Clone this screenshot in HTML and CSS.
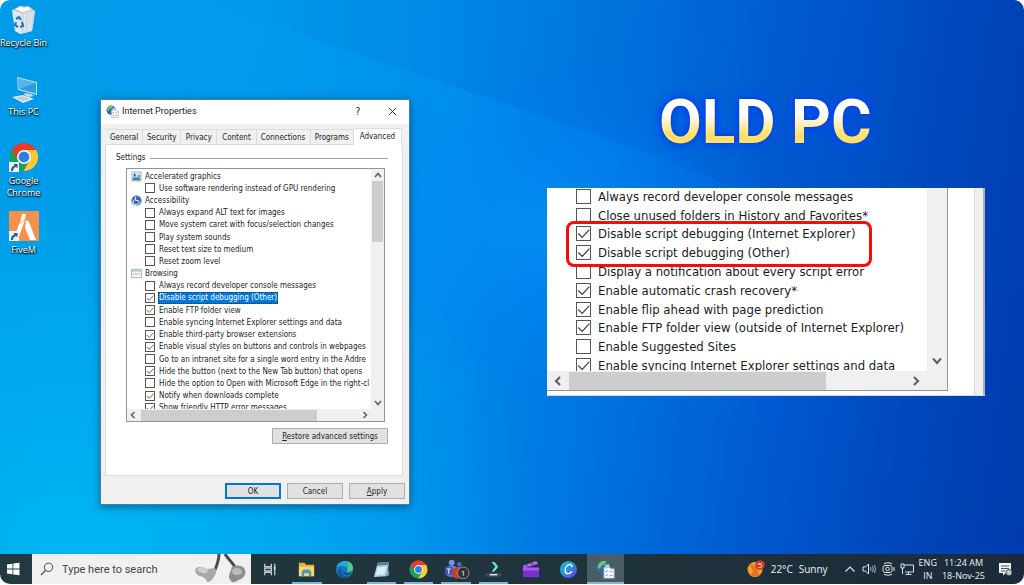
FILE: index.html
```
<!DOCTYPE html>
<html lang="en">
<head>
<meta charset="utf-8">
<title>Desktop</title>
<link rel="stylesheet" href="styles.css">
</head>
<body>
<svg class="defs" aria-hidden="true">
  <defs>
    <symbol id="chrome" viewBox="0 0 32 32">
      <circle cx="16" cy="16" r="15" fill="#1ea052"/>
      <path d="M16 16 3 8.500A15 15 0 0 1 29 8.500L16 9z" fill="#ea3a2c"/>
      <path d="M29 8.500A15 15 0 0 1 16 31l-1-1 7.200-10.500L16 8.500z" fill="#fcc934"/>
      <path d="M3 8.500 9.800 19.500l6-3V8.500z" fill="#ea3a2c"/>
      <path d="M3 8.500A15 15 0 0 0 15.500 31L22 19.500 16 23l-6.200-3.500z" fill="#1ea052"/>
      <circle cx="16" cy="16" r="7.400" fill="#fff"/>
      <circle cx="16" cy="16" r="5.800" fill="#2f7de9"/>
    </symbol>
    <symbol id="shortcut" viewBox="0 0 10 10">
      <path d="M0 0h10v10H0z" fill="#eef4fa"/>
      <path d="M2 9c0-3 1-5 3.500-5.500L4.500 2H8.500v4.200L7 5C5 5.500 4 7 4 9z" fill="#1f5aa8"/>
    </symbol>
    <symbol id="netprops" viewBox="0 0 24 24">
      <circle cx="9.500" cy="9.500" r="8.500" fill="#2c6da6"/>
      <path d="M5 3c3-2 7-2 8-1l-2 4-4 1-2 4-3-1c0-3 1-5 3-7z" fill="#79c267"/>
      <path d="M11 7l5-2 2 5-4 3z" fill="#a9dcf0"/>
      <path d="M10 9h7l2 2h4v12H10z" fill="#f5f7f8" stroke="#9aa7b0"/>
      <path d="M12 14l1 1 2-2M12 19l1 1 2-2" fill="none" stroke="#2f80c0"/>
      <path d="M17 14.500h4M17 19.500h4" stroke="#8a98a2"/>
    </symbol>
    <symbol id="up" viewBox="0 0 12 12"><path d="M3 8l3-3.500L9 8" fill="none" stroke="#606060" stroke-width="1.600"/></symbol>
    <symbol id="down" viewBox="0 0 12 12"><path d="M3 4l3 3.500L9 4" fill="none" stroke="#606060" stroke-width="1.600"/></symbol>
    <symbol id="left" viewBox="0 0 12 12"><path d="M7.500 3 4.500 6l3 3" fill="none" stroke="#606060" stroke-width="1.600"/></symbol>
    <symbol id="right" viewBox="0 0 12 12"><path d="M4.500 3l3 3-3 3" fill="none" stroke="#606060" stroke-width="1.600"/></symbol>
  </defs>
</svg>

<div class="screen">
  <main class="desktop">
    <svg class="wallpaper" viewBox="0 0 1024 554" preserveAspectRatio="none" aria-hidden="true">
      <defs>
        <linearGradient id="beamTop" x1="0" y1="0" x2="1" y2="0">
          <stop offset="0" stop-color="#0058c0" stop-opacity="0"/>
          <stop offset=".35" stop-color="#0050c0" stop-opacity=".16"/>
          <stop offset=".7" stop-color="#0048b8" stop-opacity=".22"/>
          <stop offset="1" stop-color="#0048b8" stop-opacity=".05"/>
        </linearGradient>
        <radialGradient id="glow" cx=".5" cy=".5" r=".5">
          <stop offset="0" stop-color="#0a98ff" stop-opacity=".5"/>
          <stop offset="1" stop-color="#0070ff" stop-opacity="0"/>
        </radialGradient>
        <linearGradient id="beamLow" x1="0" y1="0" x2="1" y2="0">
          <stop offset="0" stop-color="#0058c8" stop-opacity="0"/>
          <stop offset=".5" stop-color="#0058c8" stop-opacity=".1"/>
          <stop offset="1" stop-color="#003ca8" stop-opacity=".04"/>
        </linearGradient>
      </defs>
      <path d="M200 0H1024V300L640 150z" fill="url(#beamTop)"/>
      <ellipse cx="560" cy="230" rx="230" ry="170" fill="url(#glow)"/>
      <path d="M350 420 580 365 1024 520V554H350z" fill="url(#beamLow)"/>
    </svg>

    <nav class="shortcuts" aria-label="Desktop">
      <a class="shortcut" href="#bin">
        <svg class="shortcut-icon" viewBox="0 0 30 30" aria-hidden="true">
          <path d="M3 6l17-3 6 4-3 20-12 3-5-3z" fill="#e6eaee"/>
          <path d="M3 6l9 3 14-2-5-4-8-1z" fill="#bcc6cd"/>
          <path d="M6 5l5-3 4 2 4-2 3 4-9 2z" fill="#f8fafb"/>
          <path d="M12 9l14-2-3 20-11 3z" fill="#d3d9de"/>
          <path d="M16 10l-1 18M20 9l-1 18M23 9l-2 17" stroke="#e9edf0" fill="none"/>
          <path d="M7 15l3-2 2 3M13 18l1 4-3 1M9 23l-3-2 1-3" fill="none" stroke="#1d78d0" stroke-width="2.200"/>
        </svg>
        <span>Recycle Bin</span>
      </a>
      <a class="shortcut" href="#pc">
        <svg class="shortcut-icon" viewBox="0 0 30 30" aria-hidden="true">
          <path d="M8 4l20 5v13L9 17z" fill="#b7dcf4"/>
          <path d="M9 5.500l18 4.500v10.500L10 16z" fill="#2e9be0"/>
          <path d="M9 5.500 27 10 10 16z" fill="#54b4ec"/>
          <path d="M16 20l6 1 3 2-5 1-5-2z" fill="#c9d5dc"/>
          <path d="M3 24l11-2 11 4-11 4z" fill="#dfe7ec"/>
          <path d="M6 24.500l8-1 7 2.500-7 2z" fill="#bccbd4"/>
        </svg>
        <span>This PC</span>
      </a>
      <a class="shortcut" href="#chrome-app">
        <svg class="shortcut-icon" viewBox="0 0 30 30" aria-hidden="true"><use href="#chrome" width="30" height="30"/><use href="#shortcut" y="20" width="10" height="10"/></svg>
        <span>Google<br>Chrome</span>
      </a>
      <a class="shortcut" href="#fivem">
        <svg class="shortcut-icon" viewBox="0 0 30 30" aria-hidden="true">
          <path d="M0 0h30v30H0z" fill="#f98f4c"/>
          <path d="M13 3h4l-1 5-5 4zM10 13l6-4-7 19H5zM17 9l3 2 7 18h-6l-5-12z" fill="#fff"/>
          <use href="#shortcut" y="20" width="10" height="10"/>
        </svg>
        <span>FiveM</span>
      </a>
    </nav>

    <section class="dialog" role="dialog" aria-labelledby="dlg-title">
      <header class="titlebar">
        <svg class="title-icon" aria-hidden="true"><use href="#netprops"/></svg>
        <h2 id="dlg-title">Internet Properties</h2>
        <button class="caption" type="button" aria-label="Help">?</button>
        <button class="caption" type="button" aria-label="Close"><svg viewBox="0 0 10 10" aria-hidden="true"><path d="M1 1l8 8M9 1 1 9" stroke="#222" fill="none"/></svg></button>
      </header>
      <div class="tabs" role="tablist">
        <button type="button" role="tab">General</button>
        <button type="button" role="tab">Security</button>
        <button type="button" role="tab">Privacy</button>
        <button type="button" role="tab">Content</button>
        <button type="button" role="tab">Connections</button>
        <button type="button" role="tab">Programs</button>
        <button type="button" role="tab" class="active" aria-selected="true">Advanced</button>
      </div>
      <div class="panel">
        <h3 class="legend">Settings</h3>
        <div class="listbox">
          <div class="view">
            <div class="rows">
              <div class="group"><svg viewBox="0 0 12 12" aria-hidden="true"><path d="M1 1h10v10H1z" fill="#cfe6f3" stroke="#a8b8c2"/><path d="M2 7h8v3H2z" fill="#3f7fa5"/><path d="M3 3h2v3H3zM7 5h3v1H7z" fill="#2b5f85"/></svg>Accelerated graphics</div>
              <label><input type="checkbox">Use software rendering instead of GPU rendering</label>
              <div class="group"><svg viewBox="0 0 12 12" aria-hidden="true"><circle cx="6" cy="6" r="5.800" fill="#7d9cc4"/><circle cx="6" cy="6" r="4.600" fill="#3567ac"/><path d="M5 2v4h3l1 3M4 5a3 3 0 1 0 4 4" stroke="#fff" fill="none"/></svg>Accessibility</div>
              <label><input type="checkbox">Always expand ALT text for images</label>
              <label><input type="checkbox">Move system caret with focus/selection changes</label>
              <label><input type="checkbox">Play system sounds</label>
              <label><input type="checkbox">Reset text size to medium</label>
              <label><input type="checkbox">Reset zoom level</label>
              <div class="group"><svg viewBox="0 0 12 12" aria-hidden="true"><path d="M.5 1.500h11v9H.5z" fill="#f0f4f6" stroke="#a9a9a9"/><path d="M1 2h10v2H1z" fill="#b5d3e8"/><path d="M2 6.500h8" stroke="#9cc3de"/></svg>Browsing</div>
              <label><input type="checkbox">Always record developer console messages</label>
              <label><input type="checkbox" checked><span class="selected">Disable script debugging (Other)</span></label>
              <label><input type="checkbox" checked>Enable FTP folder view</label>
              <label><input type="checkbox">Enable syncing Internet Explorer settings and data</label>
              <label><input type="checkbox" checked>Enable third-party browser extensions</label>
              <label><input type="checkbox" checked>Enable visual styles on buttons and controls in webpages</label>
              <label><input type="checkbox">Go to an intranet site for a single word entry in the Addre</label>
              <label><input type="checkbox" checked>Hide the button (next to the New Tab button) that opens</label>
              <label><input type="checkbox">Hide the option to Open with Microsoft Edge in the right-cl</label>
              <label><input type="checkbox" checked>Notify when downloads complete</label>
              <label><input type="checkbox" checked>Show friendly HTTP error messages</label>
            </div>
          </div>
          <div class="vbar"><svg><use href="#up"/></svg><i></i><svg><use href="#down"/></svg></div>
          <div class="hbar"><svg><use href="#left"/></svg><i></i><svg><use href="#right"/></svg></div>
        </div>
        <button class="btn restore" type="button"><u>R</u>estore advanced settings</button>
      </div>
      <footer class="actions">
        <button class="btn default" type="button">OK</button>
        <button class="btn" type="button">Cancel</button>
        <button class="btn" type="button"><u>A</u>pply</button>
      </footer>
    </section>

    <h1 class="headline">OLD PC</h1>

    <section class="inset" aria-label="Script debugging settings">
      <div class="listbox">
        <div class="view">
          <div class="rows">
            <label><input type="checkbox">Always record developer console messages</label>
            <label><input type="checkbox">Close unused folders in History and Favorites*</label>
            <label><input type="checkbox" checked>Disable script debugging (Internet Explorer)</label>
            <label><input type="checkbox" checked>Disable script debugging (Other)</label>
            <label><input type="checkbox">Display a notification about every script error</label>
            <label><input type="checkbox" checked>Enable automatic crash recovery*</label>
            <label><input type="checkbox" checked>Enable flip ahead with page prediction</label>
            <label><input type="checkbox" checked>Enable FTP folder view (outside of Internet Explorer)</label>
            <label><input type="checkbox">Enable Suggested Sites</label>
            <label><input type="checkbox" checked>Enable syncing Internet Explorer settings and data</label>
          </div>
        </div>
        <div class="vbar"><svg><use href="#down"/></svg></div>
        <div class="hbar"><svg><use href="#left"/></svg><i></i><svg><use href="#right"/></svg></div>
      </div>
      <div class="highlight"></div>
    </section>
  </main>

  <footer class="taskbar">
    <button class="start" type="button" aria-label="Start"><svg viewBox="0 0 14 14" aria-hidden="true"><path d="M1 2.500 6.500 1.700V6.600H1zM7.300 1.600 13.500.7v5.900H7.300zM1 7.400h5.500v4.900L1 11.500zM7.300 7.400h6.200v5.900l-6.200-.9z" fill="#fff"/></svg></button>
    <form class="search">
      <svg class="lens" viewBox="0 0 14 14" aria-hidden="true"><circle cx="8.500" cy="5.300" r="4.200" fill="none" stroke="#444"/><path d="M5.500 8.300 1 13" stroke="#444" stroke-width="1.200"/></svg>
      <input type="text" placeholder="Type here to search" aria-label="Type here to search">
      <svg class="doodle" viewBox="0 0 54 30" aria-hidden="true">
        <path d="M25 0c0 6-2 11-4 16M31 0c3 5 7 8 10 13" fill="none" stroke="#4b4b4b" stroke-width="3"/>
        <path d="M2 14c5-3 9 1 12 1l7-1c2 3 1 6-1 9s-4 5-7 5c-1-4-4-5-7-6-4-1-6-5-4-8z" fill="#a9a9a9"/>
        <path d="M4 14c4-2 8 1 10 2 0 3-3 4-6 3s-5-3-4-5z" fill="#cfcfcf"/>
        <path d="M38 13c4-2 9-2 12 1 3 4 1 9-3 11-4 1-5 4-9 3-3-3-4-6-2-9z" fill="#8e8e8e"/>
        <path d="M39 15c4-2 8-1 9 2s-3 4-6 4-5-3-3-6z" fill="#bcbcbc"/>
      </svg>
    </form>
    <div class="apps">
      <button class="app" type="button" aria-label="Task View"><svg viewBox="0 0 20 20" aria-hidden="true"><path d="M5 4v3h7V4M5 16v-3h7v3M5 8.500h7v3H5zM15.500 4v12" fill="none" stroke="#c9d0d4" stroke-width="1.300"/><path d="M14.500 7h2v3h-2z" fill="#c9d0d4"/></svg></button>
      <button class="app open" type="button" aria-label="File Explorer"><svg viewBox="0 0 20 20" aria-hidden="true"><path d="M2 3h6l1.500 2H18v12H2z" fill="#e8b13a"/><path d="M2 7h16v10H2z" fill="#fbd867"/><path d="M5 17v-5l2-2h6l2 2v5h-2.500v-3h-5v3z" fill="#4597d4"/></svg></button>
      <button class="app" type="button" aria-label="Edge"><svg viewBox="0 0 20 20" aria-hidden="true"><circle cx="10" cy="10" r="9" fill="#1878c4"/><path d="M1.500 8C3 3 7 1 11 1c5 0 8 4 8 7 0 4-4 5-7 4 2-3 0-6-4-6-3 0-5 1-6.500 2z" fill="#2aa9d0"/><path d="M13 1.500c4 1 6 4 6 7 0 3-3 4-6 3.500 2-4 1-7 0-10.500z" fill="#4fcf82"/><path d="M7 9c-2 5 2 10 9 8-5 3-12 2-13-4 0-3 2-4 4-4z" fill="#0e559c"/><path d="M9 9.500c-1 4 4 6 9 4-2 2-3 2-5 2-4 0-5-3-4-6z" fill="#1f3a4c"/></svg></button>
      <button class="app open" type="button" aria-label="Notepad"><svg viewBox="0 0 20 20" aria-hidden="true"><path d="M6 3l12-1-3 15-13 1z" fill="#a9d3e6"/><path d="M6 3l12-1-1 3-12 1z" fill="#5e7c8a"/><path d="M6 8l9-1-2 8-9 1z" fill="#d9eef6"/><path d="M15 17l2-10 1 9z" fill="#7fa9bd"/></svg></button>
      <button class="app open" type="button" aria-label="Chrome"><svg aria-hidden="true"><use href="#chrome"/></svg></button>
      <button class="app open" type="button" aria-label="Teams"><svg class="wide" viewBox="0 0 28 20" aria-hidden="true"><circle cx="9" cy="3.500" r="3" fill="#7b8fe8"/><circle cx="17" cy="5" r="2.300" fill="#5866c9"/><path d="M14 8h7v6h-7z" fill="#5866c9"/><rect x="3" y="7" width="12" height="11" rx="4" fill="#6b7de0"/><path d="M2 8h8v8H2z" fill="#3f51b5"/><path d="M4 10h4M6 10v5" stroke="#fff"/><circle cx="15" cy="14" r="6" fill="#c8402d"/><circle cx="21" cy="14" r="6" fill="#2b3236" stroke="#a58f88"/><text x="21" y="17" text-anchor="middle" class="badge">1</text></svg></button>
      <button class="app open" type="button" aria-label="Filmora"><svg viewBox="0 0 20 20" aria-hidden="true"><path d="M8 2h3l4 5-4 5H8l4-5z" fill="#6fe3e6"/><ellipse cx="10" cy="15.500" rx="9" ry="2.500" fill="#3c4a54"/><path d="M6 15.500h8" stroke="#dfe6ea" stroke-width="1.500"/></svg></button>
      <button class="app" type="button" aria-label="Clipchamp"><svg viewBox="0 0 20 20" aria-hidden="true"><path d="M2 6 16 1l2 3L3 9z" fill="#b06cf2"/><path d="M2 8h17v10H2z" fill="#7a32cf"/><path d="M2 8h17v3H2z" fill="#a65df0"/><path d="M5 5l3 2M10 3l3 2" stroke="#5b1fa8"/></svg></button>
      <button class="app" type="button" aria-label="Canva"><svg viewBox="0 0 20 20" aria-hidden="true"><defs><linearGradient id="cv" x1="0" y1="0" x2="1" y2="1"><stop offset="0" stop-color="#12c3cc"/><stop offset=".5" stop-color="#2b8fdd"/><stop offset="1" stop-color="#7d2ae8"/></linearGradient></defs><circle cx="10" cy="10" r="9" fill="url(#cv)"/><path d="M13.500 7.500c.5-2-1-3-2.500-2.700C8 5.300 6.500 8.500 6.500 11c0 4 4.500 4.500 7 1" fill="none" stroke="#fff" stroke-width="1.500"/></svg></button>
      <button class="app open current" type="button" aria-label="Internet Properties"><svg aria-hidden="true"><use href="#netprops"/></svg></button>
    </div>
    <div class="tray">
      <button class="weather" type="button"><svg viewBox="0 0 18 18" aria-hidden="true"><circle cx="8" cy="9.500" r="7.500" fill="#f0a02c"/><path d="M2 5c4-2 9 2 10 11-5 2-9-1-9-1 5-3 2-8-1-10z" fill="#e8741f"/><circle cx="13" cy="5" r="4.800" fill="#cf3a26"/><text x="13" y="8" text-anchor="middle" class="badge">5</text></svg><span>22°C</span><span>Sunny</span></button>
      <button type="button" aria-label="Show hidden icons"><svg viewBox="0 0 14 14" aria-hidden="true"><path d="M2.500 9.500 7 5l4.500 4.500" fill="none" stroke="#dfe4e8" stroke-width="1.200"/></svg></button>
      <button type="button" aria-label="Volume"><svg viewBox="0 0 14 14" aria-hidden="true"><path d="M1 5h2.500L6.500 2v10L3.500 9H1z" fill="none" stroke="#dfe4e8"/><path d="M8.500 5q1 2 0 4M10.500 4q1.500 3 0 6M12.500 3q2 4 0 8" fill="none" stroke="#aab3ba"/></svg></button>
      <button type="button" aria-label="Meet Now"><svg viewBox="0 0 14 14" aria-hidden="true"><path d="M3 1.500q4-1.500 8 0M3 12.500q4 1.500 8 0" fill="none" stroke="#dfe4e8"/><rect x="2" y="3.500" width="9" height="7" rx="2" fill="none" stroke="#dfe4e8"/><circle cx="6.500" cy="7" r="1.800" fill="none" stroke="#dfe4e8"/><path d="M13 5v4" stroke="#dfe4e8"/></svg></button>
      <button type="button" aria-label="Network"><svg viewBox="0 0 14 14" aria-hidden="true"><path d="M4 3h9.500v7H5M8.500 10v2.500M5.500 12.500h6M1 2h3v4H1zM2.500 6v6" fill="none" stroke="#dfe4e8"/></svg></button>
      <button class="lines" type="button"><span>ENG</span><span>IN</span></button>
      <button class="lines clock" type="button"><span>11:24 AM</span><span>18-Nov-25</span></button>
      <button class="notify" type="button" aria-label="Notifications"><svg viewBox="0 0 14 14" aria-hidden="true"><path d="M1 1h12v10H8l-3 2.500V11H1z" fill="#eef1f3"/><path d="M3 4h8M3 6.500h8M3 9h4" stroke="#4a5660"/><circle cx="11" cy="10.500" r="3" fill="#c3cad0" stroke="#4a5660"/></svg></button>
    </div>
  </footer>
</div>
</body>
</html>
```
FILE: styles.css
```
* { box-sizing: border-box; }

body {
  margin: 0;
  background: #fff;
  font-family: "Open Sans", "Noto Sans", sans-serif;
  font-size: 9px;
}

button, input { font: inherit; color: inherit; margin: 0; }
button { padding: 0; border: 0; background: none; }
h1, h2, h3 { margin: 0; font-weight: 400; }

.defs { position: absolute; width: 0; height: 0; }

.screen {
  display: grid;
  grid-template-rows: 1fr auto;
  height: calc(100vh - 1px);
  border-radius: 10px;
  overflow: hidden;
}

/* Desktop */
.desktop {
  position: relative;
  overflow: hidden;
  background:
    radial-gradient(ellipse 45% 70% at 8% 100%, rgba(0, 184, 244, .9), rgba(0, 184, 244, 0)),
    linear-gradient(98deg, #009ce8 0%, #009aec 25%, #0090ec 42%, #0078e2 58%, #0058d0 76%, #0044b8 90%, #003cae 100%);
}
.wallpaper { position: absolute; inset: 0; width: 100%; height: 100%; }

.shortcuts {
  position: relative;
  display: grid;
  grid-auto-rows: 69px;
  width: 46px;
  padding-top: 4px;
}
.shortcut {
  display: flex;
  flex-direction: column;
  align-items: center;
  gap: 3px;
  color: #fff;
  text-decoration: none;
  text-align: center;
  line-height: 12px;
  white-space: nowrap;
  text-shadow: 0 1px 1px #000, 1px 1px 2px #000;
}
.shortcut-icon { width: 30px; height: 30px; flex: none; }

/* Check lists shared by the dialog and the inset */
.listbox {
  display: grid;
  grid-template-columns: 1fr auto;
  grid-template-rows: 1fr auto;
  background: #fff;
  border: 1px solid #8f959c;
  font-family: "DejaVu Sans Condensed", "DejaVu Sans", sans-serif;
  color: #1c1c1c;
}
.view { overflow: hidden; min-width: 0; min-height: 0; }
.rows { display: grid; grid-auto-rows: 1fr; }
.rows label, .group { display: flex; align-items: center; white-space: nowrap; }
.rows input {
  appearance: none;
  flex: none;
  border: 1px solid #555;
  background: #fff;
}
.rows input:checked {
  background: url("data:image/svg+xml,%3Csvg xmlns='http://www.w3.org/2000/svg' viewBox='0 0 10 10'%3E%3Cpath d='M1 5l3 3 5.500-6' fill='none' stroke='%23444'/%3E%3C/svg%3E") center / 100% no-repeat;
}
.vbar, .hbar { display: flex; align-items: center; background: #f0f0f0; }
.vbar { flex-direction: column; }
.hbar { grid-column: 1 / -1; }
.vbar svg, .hbar svg { flex: none; width: 12px; height: 12px; }
.vbar svg:last-child { margin-top: auto; }
.hbar svg:last-child { margin-left: auto; }
.vbar i, .hbar i { background: #cdcdcd; }

/* Dialog window */
.dialog {
  position: absolute;
  left: 100px;
  top: 99px;
  width: 310px;
  background: #f0f0f0;
  border: 1px solid #4a7f9c;
  box-shadow: 0 2px 8px rgba(0, 30, 70, .5);
  font-family: "DejaVu Sans Condensed", "DejaVu Sans", sans-serif;
  font-size: 8px;
  color: #222;
}
.titlebar {
  display: flex;
  align-items: center;
  height: 24px;
  padding: 0 0 2px 5px;
  background: #fff;
}
.title-icon { width: 13px; height: 13px; margin-right: 3px; }
.titlebar h2 { flex: 1; font: 9px Roboto, sans-serif; }
.caption { display: grid; place-items: center; width: 34px; height: 22px; font-size: 10px; }
.caption svg { width: 9px; height: 9px; }

.tabs {
  display: grid;
  grid-template-columns: 37fr 38fr 36fr 39fr 54fr 43fr 48fr;
  align-items: end;
  padding: 4px 7px 0 5px;
}
.tabs button {
  height: 15px;
  border: 1px solid #dcdcdc;
  border-width: 1px 1px 0 0;
}
.tabs .active { height: 17px; padding-bottom: 2px; background: #fff; margin-bottom: -1px; position: relative; }

.panel {
  display: flex;
  flex-direction: column;
  margin: 0 6px 0 4px;
  padding: 7px 14px 31px 10px;
  background: #fff;
  border: 1px solid #dcdcdc;
}
.legend { display: flex; align-items: center; gap: 4px; font-size: 8px; line-height: 12px; }
.legend::after { content: ""; flex: 1; border-top: 1px solid #a0a0a0; }
.panel .listbox { margin: 4px 3px 0 10px; }
.panel .view { height: 240px; padding-left: 4px; }
.panel .rows { height: 244px; margin-top: 1px; }
.panel label { padding-left: 14px; }
.panel .rows input { width: 10px; height: 10px; margin-right: 4px; }
.group svg { width: 11px; height: 11px; margin-right: 3px; }
.selected { margin-left: -1px; padding: 0 1px; background: #0078d7; color: #fff; outline: 1px dotted #333; outline-offset: -1px; line-height: 12px; }
.panel .vbar { width: 13px; }
.panel .vbar i { width: 11px; height: 61px; }
.panel .hbar { height: 12px; padding-right: 13px; }
.panel .hbar i { width: 176px; height: 11px; margin-left: 2px; }

.btn {
  height: 16px;
  border: 1px solid #adadad;
  background: #e1e1e1;
  min-width: 56px;
}
.btn.default { border: 2px solid #0078d7; }
.btn u { text-underline-offset: 1px; }
.restore { align-self: flex-end; width: 116px; margin-top: 6px; }
.actions { display: flex; justify-content: flex-end; gap: 6px; padding: 7px 4px 5px; }

/* Headline and close-up */
.headline {
  position: absolute;
  left: 659px;
  top: 86px;
  font: 700 62px/72px Roboto, sans-serif;
  white-space: nowrap;
  color: transparent;
  background: linear-gradient(#fff 38%, #ffe06a 68%, #ffe06a);
  background-clip: text;
  filter: drop-shadow(0 0 1px #123a8c) drop-shadow(0 0 4px #0048f0) drop-shadow(0 0 4px #0050f0);
}

.inset {
  position: absolute;
  left: 547px;
  top: 188px;
  width: 438px;
  padding-right: 10px;
  padding-bottom: 4px;
  background: linear-gradient(90deg, #fff 0 427px, #dcdcdc 427px 428px, #f0f0f0 428px 436px, #b0b0b0 436px);
  border-bottom: 1px solid #d8d8d8;
}
.inset .listbox { width: 401px; border-width: 0 1px 1px 0; font-size: 13px; }
.inset .view { height: 183px; padding-left: 29px; }
.inset .rows { height: 188px; margin-top: -1px; }
.inset .rows input { width: 15px; height: 15px; margin-right: 7px; }
.inset .vbar { width: 20px; padding-bottom: 2px; }
.inset .vbar svg, .inset .hbar svg { width: 16px; height: 16px; }
.inset .hbar { height: 19px; padding: 0 23px 0 3px; }
.inset .hbar i { width: 257px; height: 18px; margin-left: 3px; }
.highlight {
  position: absolute;
  left: 19px;
  top: 33px;
  width: 306px;
  height: 46px;
  border: 3px solid #f80b0b;
  border-radius: 8px;
}

/* Taskbar */
.taskbar {
  display: flex;
  height: 30px;
  background: linear-gradient(90deg, #21393f, #1f333c 60%, #1b2a3a);
  color: #eef1f3;
}
.start { display: grid; place-items: center; width: 32px; padding-right: 6px; }
.start svg { width: 14px; height: 14px; }
.search { display: flex; align-items: center; width: 219px; background: #f0f0f0; }
.lens { width: 14px; height: 14px; margin-left: 8px; }
.search input {
  flex: 1;
  min-width: 0;
  margin-left: 8px;
  padding: 0;
  border: 0;
  background: none;
  font: 11px Roboto, sans-serif;
}
.search input::placeholder { color: #444; opacity: 1; }
.doodle { width: 54px; height: 30px; margin-right: 3px; }
.apps { display: flex; width: 373px; }
.app { flex: 1; display: grid; place-items: center; position: relative; }
.app svg { width: 19px; height: 19px; }
.app .wide { width: 27px; height: 20px; }
.app.open::after { content: ""; position: absolute; inset: auto 4px 0; height: 2px; background: #76b9ed; }
.app.current { background: #4a5c66; }
.app.current::after { inset: auto 0 0; }
.badge { font: 8px "Open Sans", sans-serif; fill: #fff; }

.tray { display: flex; align-items: center; margin-left: auto; padding-right: 12px; }
.tray svg { display: block; width: 14px; height: 14px; }
.tray > button { margin-right: 5px; }
.tray .weather { display: flex; align-items: center; gap: 6px; margin-right: 15px; font-size: 10px; }
.weather svg { width: 18px; height: 18px; }
.lines { display: flex; flex-direction: column; align-items: center; line-height: 13px; }
.tray .clock { margin-right: 13px; }
.tray .notify { margin-right: 0; }
```
